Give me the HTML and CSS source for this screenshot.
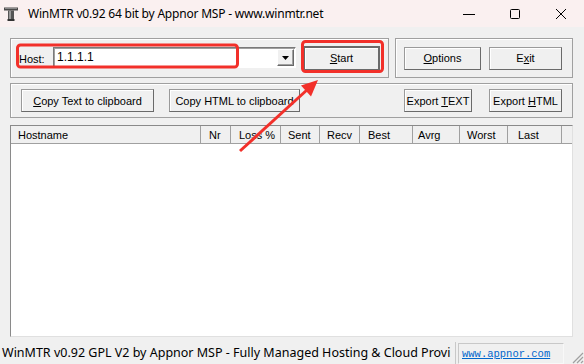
FILE: index.html
```html
<!DOCTYPE html>
<html>
<head>
<meta charset="utf-8">
<link rel="stylesheet" href="styles.css">
</head>
<body>
<div class="win">
  <div class="titlebar">
    <svg class="appicon" viewBox="0 0 14 14" width="14" height="14">
      <rect x="0" y="0.5" width="14" height="3" fill="#4a4a4a"/>
      <rect x="1" y="1" width="12" height="1" fill="#8a8a8a"/>
      <rect x="4" y="3.5" width="6" height="9" fill="#555"/>
      <rect x="5" y="4" width="2" height="8" fill="#9a9a9a"/>
      <rect x="3.5" y="12" width="7" height="2" fill="#333"/>
    </svg>
    <span class="title">WinMTR v0.92 64 bit by Appnor MSP - www.winmtr.net</span>
    <div class="controls">
      <div class="ctl"><svg width="12" height="12" viewBox="0 0 12 12"><line x1="0" y1="6.5" x2="12" y2="6.5" stroke="#000" stroke-width="1"/></svg></div>
      <div class="ctl"><svg width="12" height="12" viewBox="0 0 12 12"><rect x="1.5" y="1.5" width="9" height="9" rx="1" fill="none" stroke="#000" stroke-width="1"/></svg></div>
      <div class="ctl"><svg width="12" height="12" viewBox="0 0 12 12"><path d="M1 1L11 11M11 1L1 11" stroke="#000" stroke-width="1"/></svg></div>
    </div>
  </div>

  <div class="content">
    <div class="row1">
      <div class="group g1">
        <span class="hostlbl">Host:</span>
        <div class="combo">
          <span class="combo-text">1.1.1.1</span>
          <span class="combo-btn"><svg width="7" height="4" viewBox="0 0 7 4"><path d="M0 0H7L3.5 4Z" fill="#000"/></svg></span>
        </div>
        <button class="btn start"><u>S</u>tart</button>
      </div>
      <div class="group g2">
        <button class="btn w-opt"><u>O</u>ptions</button>
        <button class="btn w-exit">E<u>x</u>it</button>
      </div>
    </div>

    <div class="group row2">
      <button class="btn w-ctext"><u>C</u>opy Text to clipboard</button>
      <button class="btn w-chtml">Copy HTML to clipboard</button>
      <button class="btn w-etext push">Export <u>T</u>EXT</button>
      <button class="btn w-ehtml">Export <u>H</u>TML</button>
    </div>

    <div class="list">
      <div class="lhead">
        <div class="col c-host">Hostname</div>
        <div class="col c-nr">Nr</div>
        <div class="col c-loss">Loss %</div>
        <div class="col c-sent">Sent</div>
        <div class="col c-recv">Recv</div>
        <div class="col c-best">Best</div>
        <div class="col c-avrg">Avrg</div>
        <div class="col c-worst">Worst</div>
        <div class="col c-last">Last</div>
        <div class="col c-fill"></div>
      </div>
    </div>
  </div>

  <div class="status">
    <div class="st1">WinMTR v0.92 GPL V2 by Appnor MSP - Fully Managed Hosting &amp; Cloud Provi</div>
    <div class="st2"><span class="link">www.appnor.com</span></div>
    <svg class="grip" width="14" height="14" viewBox="0 0 14 14">
      <path d="M13 3L3 13M13 7L7 13M13 11L11 13" stroke="#a0a0a0" stroke-width="1.2"/>
    </svg>
  </div>

  <svg class="overlay" width="584" height="364" viewBox="0 0 584 364">
    <rect x="17.5" y="45" width="220" height="22" rx="3" fill="none" stroke="#f2302a" stroke-width="3"/>
    <rect x="302.5" y="41.5" width="80" height="30" rx="3" fill="none" stroke="#f2302a" stroke-width="3"/>
    <line x1="240" y1="151" x2="308" y2="89" stroke="#f2302a" stroke-width="3"/>
    <path d="M318 80L311 96.5L301 85.5Z" fill="#f2302a"/>
  </svg>
</div>
</body>
</html>
```

FILE: styles.css
```css
* { box-sizing: border-box; }

body {
  margin: 0;
  background: #f0f0f0;
  font-family: "Liberation Sans", Arial, sans-serif;
  font-size: 11px;
  color: #000;
}

.win {
  position: relative;
  width: 584px;
  height: 364px;
  overflow: hidden;
  display: flex;
  flex-direction: column;
  background: #f0f0f0;
}

.titlebar {
  height: 27px;
  flex: none;
  background: #faf0f0;
  display: flex;
  align-items: center;
}

.appicon { margin-left: 4px; flex: none; }

.title {
  margin-left: 10px;
  font-family: "Noto Sans", "Open Sans", sans-serif;
  font-size: 12px;
  letter-spacing: -0.2px;
}

.controls { margin-left: auto; display: flex; }

.ctl {
  width: 46px;
  height: 27px;
  display: flex;
  align-items: center;
  justify-content: center;
}

.content {
  flex: none;
  padding: 11px 11px 0 10px;
  display: flex;
  flex-direction: column;
}

.row1 {
  display: flex;
  gap: 6px;
  height: 40px;
}

.group {
  border: 1px solid #a0a0a0;
  box-shadow: inset 1px 1px 0 #fff;
}

.g1 {
  width: 379px;
  display: flex;
  align-items: center;
  padding-left: 8px;
}

.hostlbl {
  width: 34px;
  flex: none;
  padding-top: 1px;
}

.combo {
  width: 243px;
  height: 21px;
  flex: none;
  background: #fff;
  border: 1px solid;
  border-color: #7a7a7a #fff #fff #7a7a7a;
  box-shadow: inset 1px 1px 0 #a0a0a0;
  display: flex;
  align-items: stretch;
  margin-top: -1px;
}

.combo-text {
  flex: 1;
  padding-left: 3px;
  line-height: 18px;
  font-size: 12px;
}

.combo-btn {
  width: 17px;
  margin: 1px 1px 1px 0;
  background: #f0f0f0;
  border: 1px solid;
  border-color: #fff #696969 #696969 #fff;
  box-shadow: inset -1px -1px 0 #a0a0a0;
  display: flex;
  align-items: center;
  justify-content: center;
}

.btn {
  height: 23px;
  flex: none;
  background: #f0f0f0;
  border: 1px solid;
  border-color: #9a9a9a #6a6a6a #6a6a6a #9a9a9a;
  box-shadow: inset 1px 1px 0 #fff;
  font-family: "Liberation Sans", Arial, sans-serif;
  font-size: 11px;
  color: #000;
  padding: 0;
  text-align: center;
}

.start {
  width: 77px;
  height: 25px;
  margin-left: 7px;
  border: 2px solid #6a6a6a;
}

.g2 {
  width: 178px;
  display: flex;
  align-items: center;
  padding-left: 8px;
  gap: 8px;
}

.w-opt { width: 77px; }
.w-exit { width: 73px; }

.row2 {
  margin-top: 5px;
  height: 35px;
  display: flex;
  align-items: center;
  padding: 0 10px;
}

.w-ctext { width: 133px; }
.w-chtml { width: 131px; margin-left: 15px; }
.w-etext { width: 68px; }
.w-ehtml { width: 73px; margin-left: 17px; }
.push { margin-left: auto; }

.list {
  margin-top: 7px;
  height: 212px;
  background: #fff;
  border: 1px solid;
  border-color: #8a8a8a #e0e0e0 #e0e0e0 #8a8a8a;
}

.lhead {
  display: flex;
  height: 18px;
  background: #f0f0f0;
  border-bottom: 1px solid #a0a0a0;
}

.col {
  flex: none;
  height: 100%;
  border-right: 1px solid #a0a0a0;
  line-height: 18px;
  padding-left: 8px;
  white-space: nowrap;
}

.c-host { width: 190px; padding-left: 7px; }
.c-nr { width: 30px; }
.c-loss { width: 50px; }
.c-sent { width: 39px; padding-left: 7px; }
.c-recv { width: 40px; padding-left: 7px; }
.c-best { width: 53px; padding-left: 8px; }
.c-avrg { width: 47px; padding-left: 5px; }
.c-worst { width: 48px; padding-left: 7px; }
.c-last { width: 54px; padding-left: 10px; }
.c-fill { flex: 1; border-right: none; }

.status {
  margin-top: 5px;
  height: 22px;
  display: flex;
  align-items: stretch;
  position: relative;
}

.st1 {
  width: 456px;
  flex: none;
  overflow: hidden;
  white-space: nowrap;
  padding-left: 2px;
  border-right: 1px solid #c8c8c8;
  font-family: "Noto Sans", "Open Sans", sans-serif;
  font-size: 12.5px;
  line-height: 21px;
}

.st2 {
  width: 106px;
  flex: none;
  margin-left: 2px;
  margin-top: 1px;
  border: 1px solid;
  border-color: #c8c8c8 #f8f8f8 #f8f8f8 #c8c8c8;
  padding-left: 3px;
  line-height: 19px;
}

.link {
  font-family: "Liberation Mono", "DejaVu Sans Mono", monospace;
  font-size: 10.5px;
  color: #0066cc;
  text-decoration: underline;
}

.grip {
  margin-left: auto;
  align-self: flex-end;
  flex: none;
}

.overlay {
  position: absolute;
  left: 0;
  top: 0;
  pointer-events: none;
}
```
